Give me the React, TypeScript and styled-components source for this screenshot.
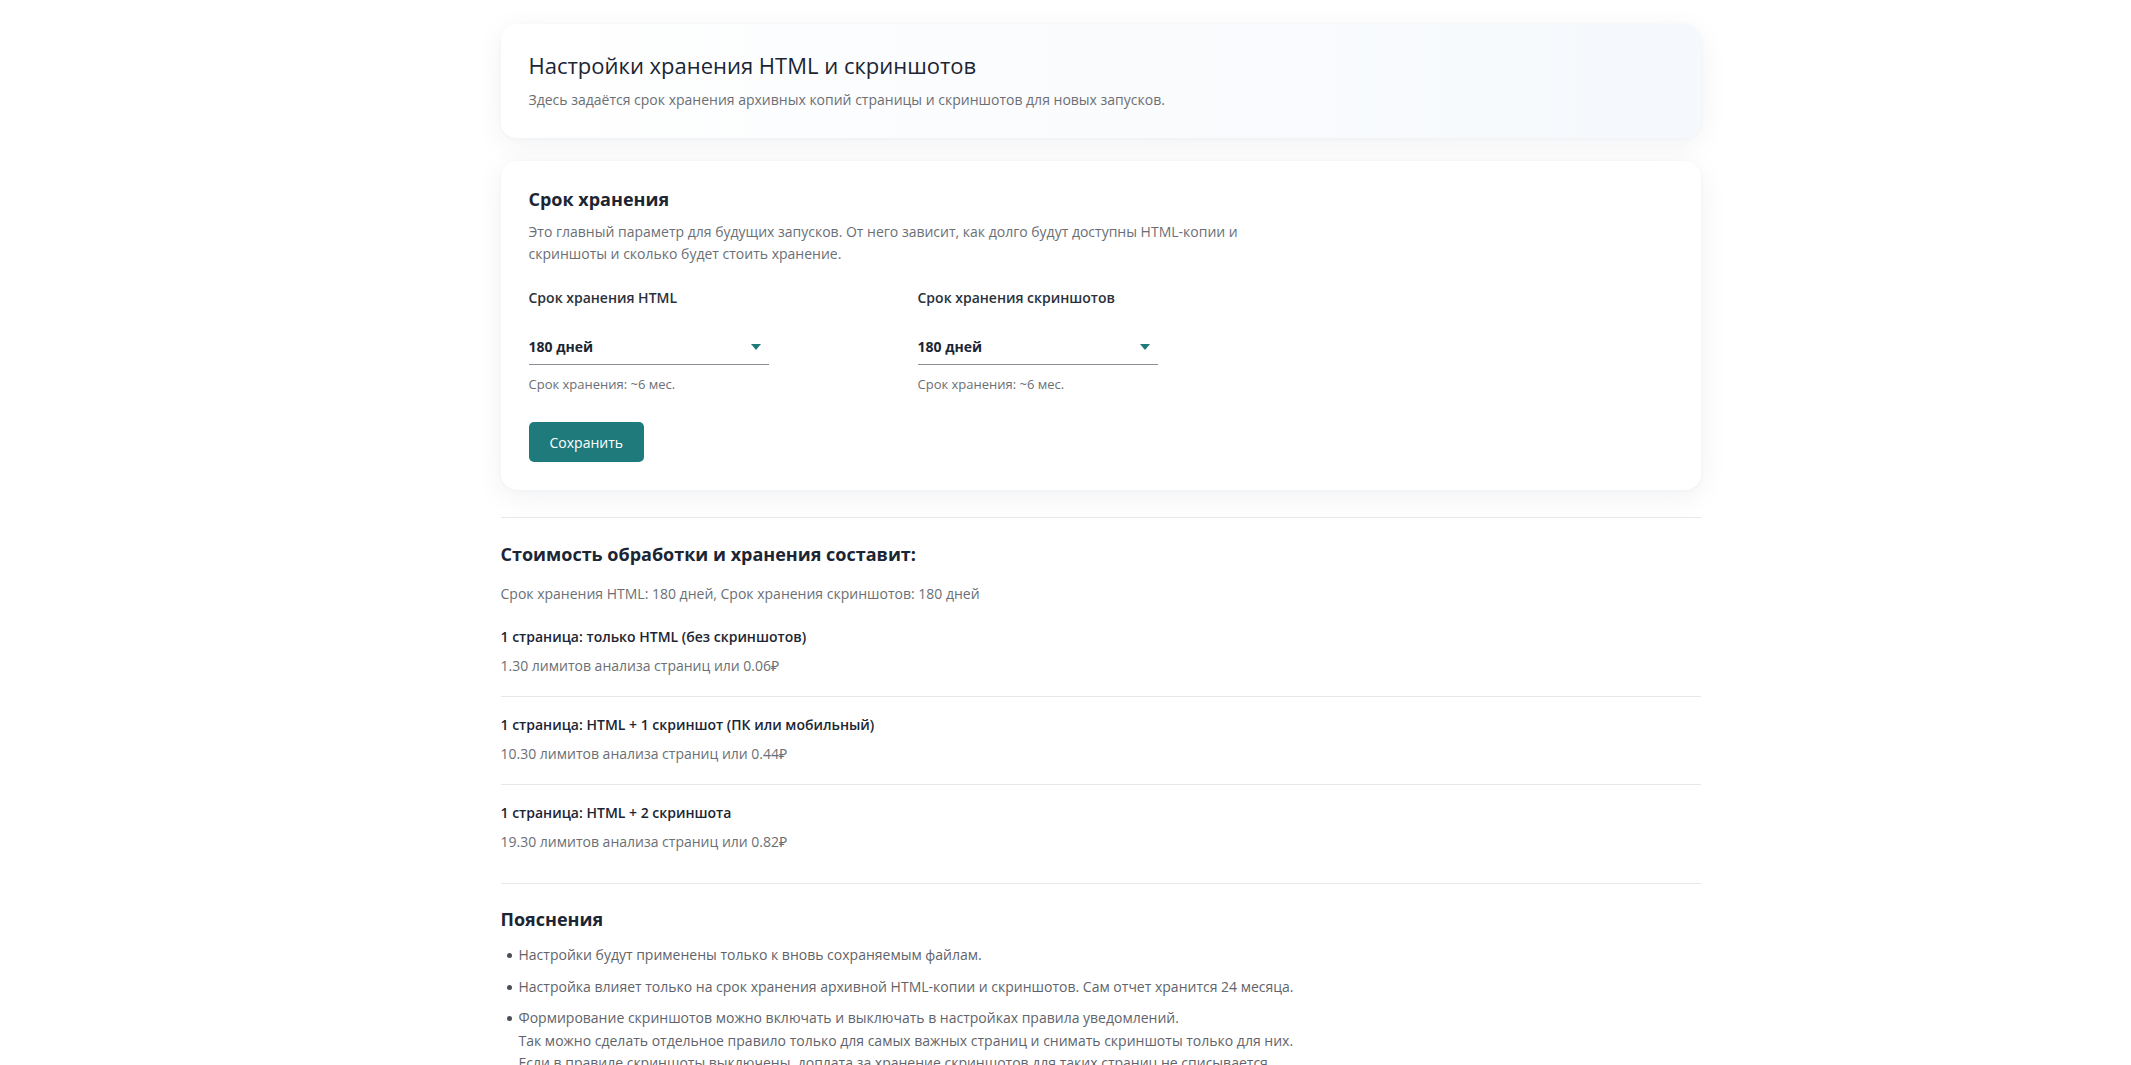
import styled, { createGlobalStyle } from "styled-components";

const GlobalStyle = createGlobalStyle`
    * {
        box-sizing: border-box;
    }
    body {
        margin: 0;
        background: #ffffff;
        font-family: "Open Sans", "Noto Sans", sans-serif;
        color: #1c2430;
    }
`;

const Main = styled.main`
    margin-left: 70px;
    padding: 24px 0 40px;
`;

const Container = styled.div`
    width: 1200px;
    margin: 0 auto;
    display: flex;
    flex-direction: column;
`;

const Card = styled.section<{ $tinted?: boolean }>`
    border-radius: 16px;
    padding: 26px 28px 28px;
    background: ${(p) => (p.$tinted ? "linear-gradient(90deg, #ffffff 0%, #f5f8fc 100%)" : "#ffffff")};
    box-shadow: 0 6px 30px rgba(20, 40, 70, 0.06), 0 1px 4px rgba(20, 40, 70, 0.03);
    & + & {
        margin-top: 23px;
    }
`;

const PageTitle = styled.h1`
    margin: 0;
    font-size: 22px;
    line-height: 30px;
    font-weight: 400;
    color: #1b2533;
`;

const PageLead = styled.p`
    margin: 10px 0 0;
    font-size: 14px;
    line-height: 20px;
    color: #6b6f75;
`;

const CardTitle = styled.h3`
    margin: 0;
    font-size: 18px;
    line-height: 24px;
    font-weight: 700;
    color: #1b2533;
`;

const CardText = styled.p`
    margin: 10px 0 0;
    max-width: 730px;
    font-size: 14px;
    line-height: 22px;
    color: #6b6f75;
`;

const Fields = styled.div`
    display: flex;
    gap: 149px;
    margin-top: 23px;
`;

const Field = styled.div`
    width: 240px;
    display: flex;
    flex-direction: column;
`;

const Label = styled.label`
    font-size: 14px;
    line-height: 20px;
    font-weight: 600;
    color: #2a313b;
`;

const Select = styled.div`
    margin-top: 21px;
    padding: 8px 0 7px;
    border-bottom: 1px solid #8a8f96;
    display: flex;
    align-items: center;
    justify-content: space-between;
    font-size: 14px;
    line-height: 20px;
    font-weight: 700;
    color: #1b2533;
    cursor: pointer;
    svg {
        width: 10px;
        height: 6px;
        margin-right: 8px;
        fill: #1f7a7c;
    }
`;

const Hint = styled.span`
    margin-top: 10px;
    font-size: 13px;
    line-height: 18px;
    color: #6b6f75;
`;

const SaveButton = styled.button`
    margin-top: 29px;
    height: 40px;
    padding: 0 21px;
    border: 0;
    border-radius: 5px;
    background: #1f7a7c;
    color: #ffffff;
    font-family: inherit;
    font-size: 14px;
    cursor: pointer;
`;

const Divider = styled.hr<{ $gap: number }>`
    margin: ${(p) => p.$gap}px 0 0;
    border: 0;
    border-top: 1px solid #e6e8eb;
`;

const SectionTitle = styled.h2<{ $gap?: number }>`
    margin: ${(p) => p.$gap ?? 24}px 0 0;
    font-size: 18px;
    line-height: 24px;
    font-weight: 700;
    color: #1b2533;
`;

const Summary = styled.p`
    margin: 18px 0 5px;
    font-size: 14px;
    line-height: 20px;
    color: #6b6f75;
`;

const PriceRow = styled.div`
    padding: 18px 0 20px;
    display: flex;
    flex-direction: column;
    gap: 9px;
    & + & {
        border-top: 1px solid #e6e8eb;
    }
`;

const PriceTitle = styled.span`
    font-size: 14px;
    line-height: 20px;
    font-weight: 600;
    color: #1b2533;
`;

const PriceValue = styled.span`
    font-size: 14px;
    line-height: 20px;
    color: #6b6f75;
`;

const Notes = styled.ul`
    margin: 13px 0 0;
    padding: 0;
    list-style: none;
    display: flex;
    flex-direction: column;
    gap: 9px;
`;

const Note = styled.li`
    position: relative;
    padding-left: 18px;
    font-size: 14px;
    line-height: 22.5px;
    color: #5f646b;
    &::before {
        content: "";
        position: absolute;
        left: 6px;
        top: 9px;
        width: 5px;
        height: 5px;
        border-radius: 50%;
        background: #4b5058;
    }
`;

const prices = [
    { title: "1 страница: только HTML (без скриншотов)", value: "1.30 лимитов анализа страниц или 0.06₽" },
    { title: "1 страница: HTML + 1 скриншот (ПК или мобильный)", value: "10.30 лимитов анализа страниц или 0.44₽" },
    { title: "1 страница: HTML + 2 скриншота", value: "19.30 лимитов анализа страниц или 0.82₽" },
];

function Arrow() {
    return (
        <svg viewBox="0 0 10 6">
            <path d="M0 0h10L5 6z" />
        </svg>
    );
}

export default function App() {
    return (
        <>
            <GlobalStyle />
            <Main>
                <Container>
                    <Card $tinted>
                        <PageTitle>Настройки хранения HTML и скриншотов</PageTitle>
                        <PageLead>Здесь задаётся срок хранения архивных копий страницы и скриншотов для новых запусков.</PageLead>
                    </Card>

                    <Card>
                        <CardTitle>Срок хранения</CardTitle>
                        <CardText>
                            Это главный параметр для будущих запусков. От него зависит, как долго будут доступны HTML-копии и скриншоты и сколько будет стоить хранение.
                        </CardText>
                        <Fields>
                            <Field>
                                <Label>Срок хранения HTML</Label>
                                <Select>
                                    180 дней
                                    <Arrow />
                                </Select>
                                <Hint>Срок хранения: ~6 мес.</Hint>
                            </Field>
                            <Field>
                                <Label>Срок хранения скриншотов</Label>
                                <Select>
                                    180 дней
                                    <Arrow />
                                </Select>
                                <Hint>Срок хранения: ~6 мес.</Hint>
                            </Field>
                        </Fields>
                        <SaveButton>Сохранить</SaveButton>
                    </Card>

                    <Divider $gap={27} />
                    <SectionTitle>Стоимость обработки и хранения составит:</SectionTitle>
                    <Summary>Срок хранения HTML: 180 дней, Срок хранения скриншотов: 180 дней</Summary>
                    <div>
                        {prices.map((p) => (
                            <PriceRow key={p.title}>
                                <PriceTitle>{p.title}</PriceTitle>
                                <PriceValue>{p.value}</PriceValue>
                            </PriceRow>
                        ))}
                    </div>

                    <Divider $gap={11} />
                    <SectionTitle $gap={23}>Пояснения</SectionTitle>
                    <Notes>
                        <Note>Настройки будут применены только к вновь сохраняемым файлам.</Note>
                        <Note>Настройка влияет только на срок хранения архивной HTML-копии и скриншотов. Сам отчет хранится 24 месяца.</Note>
                        <Note>
                            Формирование скриншотов можно включать и выключать в настройках правила уведомлений.
                            <br />
                            Так можно сделать отдельное правило только для самых важных страниц и снимать скриншоты только для них.
                            <br />
                            Если в правиле скриншоты выключены, доплата за хранение скриншотов для таких страниц не списывается.
                        </Note>
                    </Notes>
                </Container>
            </Main>
        </>
    );
}
